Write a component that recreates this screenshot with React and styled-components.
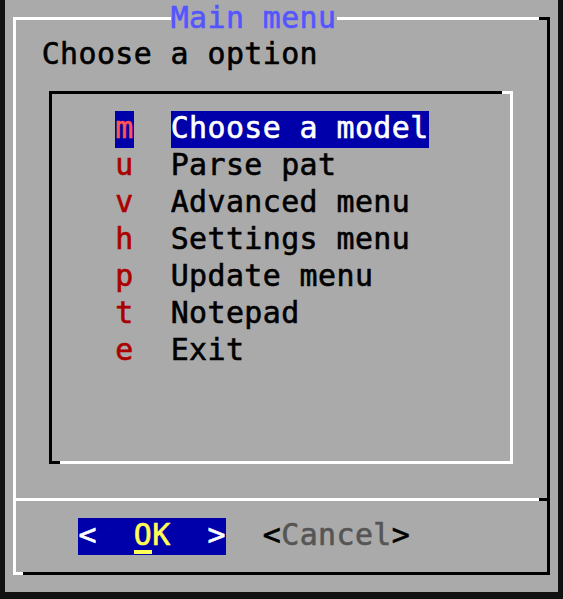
import React from 'react';
import styled, { createGlobalStyle } from 'styled-components';

const CW = 18.43; // terminal cell width
const RH = 37; // terminal cell height
const T = 3; // line thickness
const HALF_X = CW / 2 - T / 2;
const HALF_Y = RH / 2 - T / 2;

const C = {
  gray: '#aaaaaa',
  blue: '#0000aa',
  lightBlue: '#5555ff',
  red: '#aa0000',
  lightRed: '#ff5555',
  yellow: '#ffff55',
  white: '#ffffff',
  black: '#000000',
  dim: '#555555',
};

const GlobalStyle = createGlobalStyle`
  html, body { margin: 0; padding: 0; background: #111; }
  #root { width: 563px; height: 599px; }
`;

const Page = styled.div`
  width: 563px;
  height: 599px;
  box-sizing: border-box;
  padding-left: 4.8px;
  background: #111;
`;

const Screen = styled.div`
  width: ${30 * CW}px;
  height: ${16 * RH}px;
  box-sizing: border-box;
  padding: ${HALF_Y}px ${HALF_X}px;
  background: ${C.gray};
  font-family: "DejaVu Sans Mono", monospace;
  font-size: 29.9px;
  font-weight: normal;
  -webkit-text-stroke: 0.6px currentColor;
  letter-spacing: 0.43px;
  line-height: 33px;
  color: ${C.black};
  white-space: pre;
`;

const Dialog = styled.div`
  position: relative;
  height: 100%;
  box-sizing: border-box;
  border: ${T}px solid;
  border-color: ${C.white} ${C.black} ${C.black} ${C.white};
  padding: ${HALF_Y}px 0 0 ${HALF_X}px;
  display: flex;
  flex-direction: column;

  &::before {
    content: '';
    position: absolute;
    top: -${T}px;
    right: -${T}px;
    width: ${CW / 2 + T / 2}px;
    height: ${T}px;
    background: ${C.black};
  }
  &::after {
    content: '';
    position: absolute;
    bottom: -${T}px;
    left: -${T}px;
    width: ${CW / 2 + T / 2}px;
    height: ${T}px;
    background: ${C.white};
  }
`;

const Title = styled.div`
  position: absolute;
  top: -${RH / 2 + T / 2}px;
  left: ${8 * CW + HALF_X}px;
  width: ${9 * CW}px;
  height: ${RH}px;
  padding-top: 1px;
  box-sizing: border-box;
  background: ${C.gray};
  color: ${C.lightBlue};
`;

const Prompt = styled.div`
  height: ${RH}px;
  margin-left: ${CW}px;
`;

const MenuBox = styled.div`
  position: relative;
  box-sizing: border-box;
  margin-top: ${HALF_Y}px;
  margin-left: ${1.5 * CW - T / 2}px;
  width: ${25 * CW + T}px;
  height: ${10 * RH + T}px;
  border: ${T}px solid;
  border-color: ${C.black} ${C.white} ${C.white} ${C.black};
  padding: ${HALF_Y}px 0 0 ${3.5 * CW - T / 2}px;
  display: flex;
  flex-direction: column;

  &::before {
    content: '';
    position: absolute;
    top: -${T}px;
    right: -${T}px;
    width: ${CW / 2 + T / 2}px;
    height: ${T}px;
    background: ${C.white};
  }
  &::after {
    content: '';
    position: absolute;
    bottom: -${T}px;
    left: -${T}px;
    width: ${CW / 2 + T / 2}px;
    height: ${T}px;
    background: ${C.black};
  }
`;

const Item = styled.div`
  display: flex;
  height: ${RH}px;
  gap: ${2 * CW}px;
`;

const Tag = styled.span`
  display: block;
  width: ${CW}px;
  height: ${RH}px;
  background: ${(p) => (p.$selected ? C.blue : 'transparent')};
  color: ${(p) => (p.$selected ? C.lightRed : C.red)};
`;

const Label = styled.span`
  display: block;
  width: ${(p) => p.$cols * CW}px;
  height: ${RH}px;
  overflow: hidden;
  background: ${(p) => (p.$selected ? C.blue : 'transparent')};
  color: ${(p) => (p.$selected ? C.white : C.black)};
`;

const Separator = styled.div`
  margin: ${RH - T}px 0 0 -${HALF_X}px;
  height: ${T}px;
  background: linear-gradient(
    to right,
    ${C.white} calc(100% - ${HALF_X}px),
    ${C.black} 0
  );
`;

const ButtonRow = styled.div`
  display: flex;
  gap: ${2 * CW}px;
  margin-top: ${HALF_Y}px;
  margin-left: ${3 * CW}px;
  height: ${RH}px;
`;

const Button = styled.div`
  display: flex;
  width: ${8 * CW}px;
  height: ${RH}px;
  background: ${(p) => (p.$active ? C.blue : 'transparent')};
  color: ${(p) => (p.$active ? C.white : C.black)};
`;

const Cell = styled.span`
  position: relative;
  display: block;
  width: ${CW}px;
  height: ${RH}px;
  color: ${(p) => p.$color || 'inherit'};

  ${(p) =>
    p.$cursor &&
    `
    &::after {
      content: '';
      position: absolute;
      left: 0;
      bottom: 1px;
      width: ${CW}px;
      height: 4px;
      background: ${C.yellow};
    }
  `}
`;

const items = [
  { tag: 'm', label: 'Choose a model' },
  { tag: 'u', label: 'Parse pat' },
  { tag: 'v', label: 'Advanced menu' },
  { tag: 'h', label: 'Settings menu' },
  { tag: 'p', label: 'Update menu' },
  { tag: 't', label: 'Notepad' },
  { tag: 'e', label: 'Exit' },
];

function ButtonText({ text, labelColor, bracketColor, cursorAt }) {
  return text.split('').map((ch, i) => {
    const isBracket = ch === '<' || ch === '>';
    return (
      <Cell
        key={i}
        $color={isBracket ? bracketColor : labelColor}
        $cursor={cursorAt === i}
      >
        {ch}
      </Cell>
    );
  });
}

export default function App() {
  const selected = 0;
  return (
    <>
      <GlobalStyle />
      <Page>
        <Screen>
          <Dialog>
            <Title>Main menu</Title>
            <Prompt>Choose a option</Prompt>
            <MenuBox>
              {items.map((it, i) => (
                <Item key={it.tag}>
                  <Tag $selected={i === selected}>{it.tag}</Tag>
                  <Label $selected={i === selected} $cols={it.label.length}>
                    {it.label}
                  </Label>
                </Item>
              ))}
            </MenuBox>
            <Separator />
            <ButtonRow>
              <Button $active>
                <ButtonText
                  text="<  OK  >"
                  labelColor={C.yellow}
                  bracketColor={C.white}
                  cursorAt={3}
                />
              </Button>
              <Button>
                <ButtonText
                  text="<Cancel>"
                  labelColor={C.dim}
                  bracketColor={C.black}
                />
              </Button>
            </ButtonRow>
          </Dialog>
        </Screen>
      </Page>
    </>
  );
}
